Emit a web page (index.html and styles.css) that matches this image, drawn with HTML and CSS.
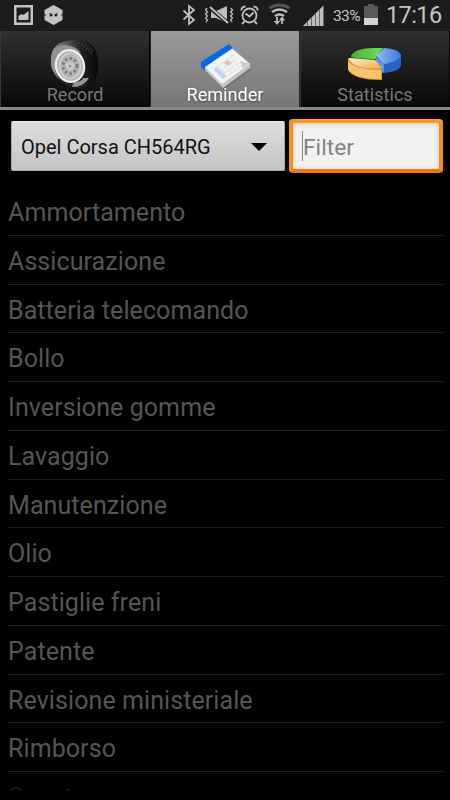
FILE: index.html
```
<!DOCTYPE html>
<html lang="it">
<head>
<meta charset="utf-8">
<title>Reminder</title>
<link rel="stylesheet" href="styles.css">
</head>
<body>
<div class="status">
  <svg class="notifications" width="52" height="31" viewBox="0 0 52 31">
    <path fill="#c4c4c4" fill-rule="evenodd" d="M0 5h19v20H0zM2.500 7.500v15h14v-15z"/>
    <path fill="#c4c4c4" d="M4.500 20v-4l3-2 2 1 5-4v9z"/>
    <path fill="#c4c4c4" d="M39.500 5l9 5v10l-9 5-9-5V10z"/>
    <path stroke="#1c1c1c" stroke-width="1.200" fill="none" d="M35.500 13.500l3 1.500M43.500 13.500l-3 1.500M30 15h2M47 15h2"/>
    <circle cx="37" cy="15.300" r="1.200" fill="#1c1c1c"/><circle cx="42" cy="15.300" r="1.200" fill="#1c1c1c"/>
  </svg>
  <svg class="signals" width="143" height="31" viewBox="182 0 143 31">
    <g fill="none" stroke="#bdbdbd" stroke-width="1.800">
      <path d="M183.500 10.500l10.500 9.500-5 4V6l5 4-10.500 9.500"/>
      <path stroke-width="1.300" d="M207 8l-1.500 2 2 2-2 2 2 2-2 2 2 2-1.500 2M231 8l1.500 2-2 2 2 2-2 2 2 2-2 2 1.500 2"/>
      <circle cx="249.500" cy="15.500" r="7"/>
      <path d="M245.500 13.500l4 3 4-4M244.500 21.500l-2.500 2.500M254.500 21.500l2.500 2.500M241.500 10.500q-.5-3.500 4-4M257.500 10.500q.5-3.500-4-4"/>
      <path stroke="#555" stroke-width="3" d="M269.500 8q10-6 20 0"/>
      <path stroke-width="2.500" d="M272 12q7.500-5 15 0M275 16q4.500-3 9 0"/>
      <path d="M277 17v6M282 24v-6"/>
    </g>
    <path fill="#bdbdbd" d="M211 11h5l11-5v17l-11-5h-5zM273.800 21h6.400l-3.200 4zM278.800 20.500h6.400l-3.200-4zM303 26l20.500-20.500V26z"/>
    <path stroke="#1c1c1c" stroke-width="4" d="M209 7l20 17"/>
    <path stroke="#bdbdbd" stroke-width="2" d="M210 7l18 16"/>
    <path stroke="#666" d="M307.500 22v4M311.500 18v8M315.500 14v12M319.500 10v16"/>
  </svg>
  <span class="percent">33%</span>
  <svg class="battery" width="14" height="31" viewBox="0 0 14 31"><path fill="#595959" d="M0 6h4V4h6v2h4v12H0z"/><path fill="#d2d2d2" d="M0 18h14v7H0z"/></svg>
  <span class="clock">17:16</span>
</div>
<nav class="tabs">
  <div class="tab">
    <svg width="54" height="54" viewBox="47 36 54 54">
      <defs>
        <linearGradient id="rubber"><stop offset="0" stop-color="#999"/><stop offset=".4" stop-color="#4c4c4c"/><stop offset=".65" stop-color="#202020"/><stop offset="1" stop-color="#090909"/></linearGradient>
      </defs>
      <path fill="url(#rubber)" d="M50 59q0-15 16-18 23-4 29 10 5 19-1 29-7 8-18 8-26-6-26-29z"/>
      <path fill="#939393" d="M50 64q-1-19 15-19 10 1 15 8-15-5-23 7l-1 16q-6-6-6-12zM88 78q-5 9-17 9l2-5q8 0 9-4z"/>
      <path fill="#202020" d="M54 68q2 10 14 14l4 1-2 5q-14-5-16-20z"/>
      <ellipse cx="69" cy="66" rx="14" ry="16" fill="#b4b4b4" stroke="#eee" stroke-width="2.200" transform="rotate(-15 69 66)"/>
      <ellipse cx="69" cy="66" rx="10.500" ry="12.500" fill="none" stroke="#d0d0d0" stroke-width="1.500"/>
      <ellipse cx="69" cy="66" rx="7" ry="7.500" fill="none" stroke="#777" stroke-width="2.800" stroke-dasharray="2.200 2.600"/>
      <circle cx="69" cy="66" r="4" fill="#ccc"/><circle cx="69" cy="66" r="1.300" fill="#888"/>
      <path stroke="#414141" stroke-dasharray="1 2" stroke-width="2" d="M78 43l13 10M82 42l10 9"/>
    </svg>
    <span class="label">Record</span>
  </div>
  <div class="tab active">
    <svg width="54" height="54" viewBox="197 36 54 54">
      <path fill="#666" opacity=".5" d="M202 67l21 23 27-20-2-4z"/>
      <path fill="#c4c4c4" d="M201 63l27-18 21 19v4l-27 20-21-21z"/>
      <path fill="#f3f3f3" d="M203 66l27-18 19 16-28 20z"/>
      <path fill="#0868ed" d="M200 62l28-18 4 4-28 19v4l-4-4z"/>
      <path fill="#b9d1f5" d="M216 67l9 9-3 3-9-9z"/>
      <path fill="#eeb49c" d="M227 60l4 3-4 3-4-3z"/>
      <path fill="none" stroke="#d5d9e0" stroke-width=".7" d="M213 69l20-14M216 73l20-14M219 76l20-14M222 79l21-15M217 65l9 12M221 62l10 12M225 59l10 12M229 56l10 12"/>
      <path fill="#ccc" d="M239 61l10 3-7 5z"/>
    </svg>
    <span class="label">Reminder</span>
  </div>
  <div class="tab">
    <svg width="54" height="54" viewBox="348 36 54 54">
      <defs>
        <linearGradient id="blue"><stop offset="0" stop-color="#91bdfb"/><stop offset="1" stop-color="#3879dc"/></linearGradient>
        <linearGradient id="gold" x2="1" y2="1"><stop offset="0" stop-color="#fff3c4"/><stop offset="1" stop-color="#f2aa4f"/></linearGradient>
        <linearGradient id="green"><stop offset="0" stop-color="#43b72b"/><stop offset="1" stop-color="#78dc58"/></linearGradient>
      </defs>
      <path fill="#287f1d" d="M351 55l25 2v6l-25-3z"/>
      <path fill="url(#green)" d="M351 56q4-8 23-8h9l-7 9v2l-19-1z"/>
      <path fill="#2464c4" d="M376 56l6 7v10q18-1 19-8V54z"/>
      <path fill="url(#blue)" d="M384 48q15 1 17 7-1 6-17 9l-8-8z"/>
      <path fill="#5b98ee" d="M376 57l8 7v9l-8-8z"/>
      <path fill="#e09235" d="M348 59v11q5 10 34 10V67z"/>
      <path fill="url(#gold)" d="M348 58l27 2 7 8q-27 3-34-10z"/>
      <path fill="#f7c36c" d="M348 61q7 9 33 9v9q-27 0-33-10z"/>
    </svg>
    <span class="label">Statistics</span>
  </div>
</nav>
<div class="controls">
  <div class="spinner"><span>Opel Corsa CH564RG</span><svg width="16" height="8" viewBox="0 0 16 8"><path d="M0 0h16L8 8z"/></svg></div>
  <div class="filter"><span>Filter</span></div>
</div>
<ul class="list">
  <li>Ammortamento</li>
  <li>Assicurazione</li>
  <li>Batteria telecomando</li>
  <li>Bollo</li>
  <li>Inversione gomme</li>
  <li>Lavaggio</li>
  <li>Manutenzione</li>
  <li>Olio</li>
  <li>Pastiglie freni</li>
  <li>Patente</li>
  <li>Revisione ministeriale</li>
  <li>Rimborso</li>
  <li class="fading">Sconto</li>
</ul>
</body>
</html>
```
FILE: styles.css
```
* { box-sizing: border-box; }
body {
  margin: 0;
  height: 800px;
  overflow: hidden;
  background: #000;
  font-family: Roboto, "Liberation Sans", sans-serif;
}
svg { display: block; flex: none; }
.status {
  display: flex;
  height: 31px;
  background: #1c1c1c;
  color: #c4c4c4;
}
.notifications { margin-left: 14px; }
.signals { margin-left: 116px; }
.percent { width: 31px; margin-left: 8px; font-size: 15.5px; line-height: 32px; letter-spacing: -.6px; }
.clock { margin-left: 8px; font-size: 23.5px; line-height: 30px; letter-spacing: -.6px; }
.tabs {
  display: grid;
  grid-template-columns: repeat(3, 1fr);
  height: 79px;
  border-bottom: 3px solid #888;
}
.tab {
  display: flex;
  flex-direction: column;
  align-items: center;
  padding-top: 5px;
  border-left: 1px solid #363636;
  border-right: 1px solid #050505;
  background: linear-gradient(#303030, #080808);
  color: #777;
}
.tab.active { background: linear-gradient(#999, #777); color: #fff; border-color: #aaa #222; }
.label { margin-top: -5px; font-size: 18px; line-height: 20px; letter-spacing: .05px; }
.active .label { text-shadow: 0 1px 2px #444; }
.controls {
  display: flex;
  gap: 4px;
  padding: 9px 7px 0 11px;
  height: 69px;
}
.spinner {
  display: flex;
  align-items: center;
  justify-content: space-between;
  width: 274px;
  height: 50px;
  margin-top: 2px;
  padding: 2px 17px 0 9px;
  border: 1px solid #aaa;
  border-top-color: #eee;
  border-radius: 2px;
  background: linear-gradient(#dedede, #c4c4c4);
  color: #111;
  font-size: 20px;
}
.filter {
  flex: 1;
  height: 54px;
  padding: 8px 9px;
  border: 4px solid #ff8a12;
  border-top-color: #ff961c;
  border-bottom-color: #f47708;
  border-radius: 4px;
  background: #f1f1f1;
  box-shadow: inset 0 1px 5px #ccc;
  color: #858585;
  font-size: 22.800px;
  line-height: 33px;
}
.filter span { display: block; height: 30px; border-left: 1px solid #888; }
.list {
  height: 612px;
  margin: 0;
  padding: 8px 7px 0 8px;
  overflow: hidden;
  list-style: none;
}
.list li {
  height: 48.750px;
  border-bottom: 1px solid #202020;
  color: #555;
  font-size: 25px;
  line-height: 51px;
  letter-spacing: .08px;
}
.list .fading { height: 19.500px; overflow: hidden; border: 0; color: #1b1b1b; }
```
